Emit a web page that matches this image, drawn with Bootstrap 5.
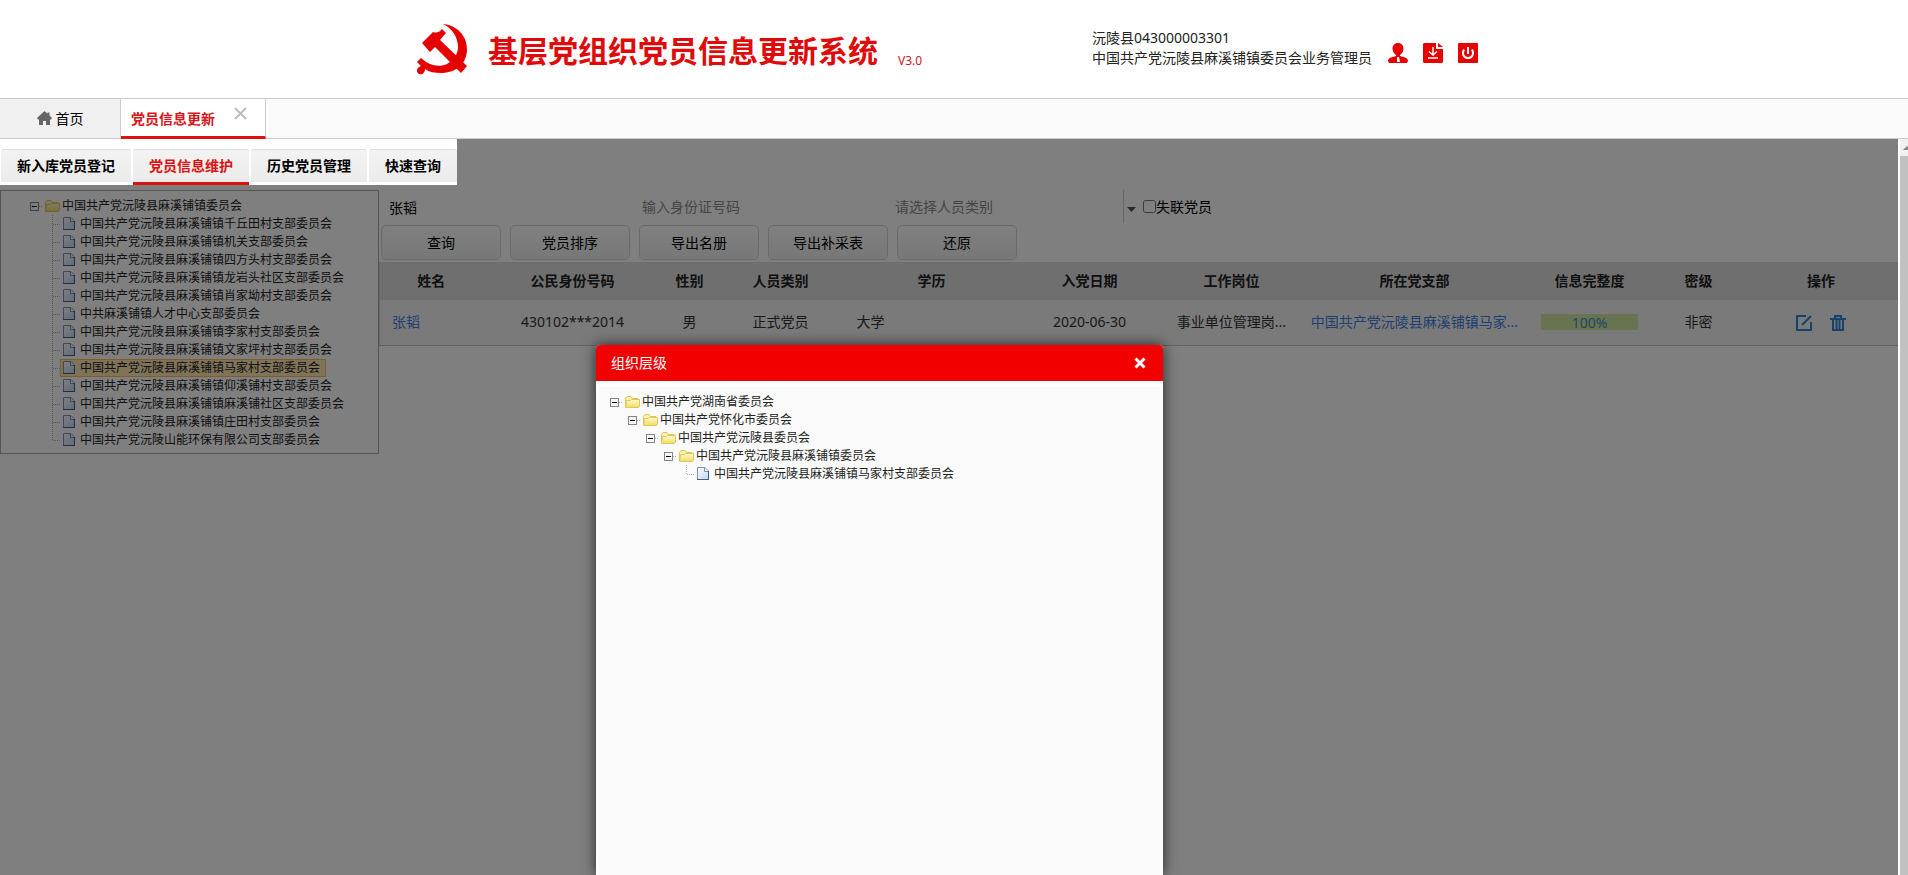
<!DOCTYPE html>
<html lang="zh-CN">
<head>
<meta charset="utf-8">
<meta name="viewport" content="width=device-width, initial-scale=1">
<title>基层党组织党员信息更新系统</title>
<link href="https://cdn.jsdelivr.net/npm/bootstrap@5.3.0/dist/css/bootstrap.min.css" rel="stylesheet">
<style>
body{font-family:"Noto Sans","Noto Sans CJK SC",sans-serif;font-size:14px;line-height:20px;color:#222;height:100vh;overflow:hidden;background:#fff}
a{text-decoration:none;color:inherit}
.site-head{height:98px}
.head-inner{max-width:1076px}
.emblem{width:52px;height:52px;fill:#e60000}
.site-title{font-size:30px;line-height:40px;font-weight:700;color:#e00a0a;font-family:"Noto Sans CJK SC",sans-serif}
.version{font-size:12px;line-height:20px;color:#c8161d}
.head-user{padding-bottom:2px}
.head-links{gap:15px;padding-right:14px}
.head-icon{width:20px;height:20px;display:block}
.page-tabs{height:41px;background:#fafafa;border-top:1px solid #ccc;border-bottom:1px solid #ccc}
.tab-home{width:121px;background:#f0f0f0;border-right:1px solid #ccc;color:#000}
.tab-open{width:145px;background:#fff;border-right:1px solid #ccc;border-bottom:3px solid #e01010;height:40px;color:#d7141a;padding:2px 18px 0 10px}
.tab-close{width:13px;height:13px;margin-bottom:10px}
.workspace{background:#fff}
.shade{background:rgba(0,0,0,.5);z-index:1}
.sub-tabs{z-index:2;background:#fff;padding:10px 0 0 1px;gap:2px}
.sub-tabs a{padding:0 16px;height:36px;line-height:32px;font-weight:700;color:#000;background:linear-gradient(#f3f3f3,#ebebeb);background-clip:padding-box;border-top:1px solid #ddd;border-bottom:3px solid #fff;border-radius:3px 3px 0 0}
.sub-tabs a.current{color:#e01010;border-bottom-color:#e01010}
.content-row{padding-top:5px}
.tree-panel{width:379px;border:1px solid #aaa;padding:6px 0 4px 24px}
.tree{font-size:12px;line-height:18px;list-style:none;margin:0;padding:0}
.tree ul{list-style:none;margin:0;padding:0 0 0 18px}
.node{display:flex;height:18px;align-items:center;color:#222}
.node svg{width:18px;height:18px;flex:none}
.node span{padding:0 1px}
.node .pick{display:flex;align-items:center;height:16px;background:#ffe6b0;outline:1px solid #ffb951;padding-right:4px}
.filters{height:33px}
.filters input[type=text],.filters select{border:0;background:transparent;padding:0 10px;width:253px;color:#000;outline:0;height:33px}
.filters input::placeholder{color:#8a8a8a;opacity:1}
.filters select{appearance:none;color:#8a8a8a;width:239px;border-right:1px solid #ccc}
.filters svg{width:9px;height:5px;margin:6px 7px 0 3px}
.filters input[type=checkbox]{width:13px;height:13px;margin:0}
.actions{gap:9px;padding:2px 0 2px 2px}
.actions button{width:120px;height:35px;border:1px solid #d5d5d5;border-radius:5px;background:linear-gradient(#fff,#f0f0f0);color:#000;font-size:14px}
.members{table-layout:fixed;width:100%;text-align:center;border-left:1px solid #ccc}
.members th{height:38px;padding:0;background:#dedede;color:#222}
.members td{height:45px;padding:0;background:#f4f4f4;border-bottom:1px solid #c5c5c5;color:#333;white-space:nowrap}
.members td.flush{text-align:left;padding-left:12px}
.members td a{color:#3f7fe0}
.complete{height:16px;width:97px;background:#d0e6a2;line-height:18px;color:#3f8fd0}
.op-icon{width:18px;height:18px;fill:none;stroke:#2f86d6;stroke-width:2}
.scroll-rail{width:11px;background:#f1f1f1;border-left:2px solid #fff}
.scroll-up{height:17px}
.scroll-thumb{background:#c1c1c1}
.dialog{z-index:3;left:596px;top:206px;bottom:0;width:567px;border-radius:4px 4px 0 0;background:#fff;box-shadow:0 0 14px rgba(0,0,0,.7)}
.dialog-head{height:36px;background:#f20000;color:#fff;border-radius:4px 4px 0 0;padding:0 15px}
.dialog-head button{border:0;background:none;padding:0;width:16px;height:16px}
.dialog-body{background:#fafafa;margin:6px 3px 0;padding:6px}
</style>
</head>
<body class="d-flex flex-column">
<svg width="0" height="0" class="position-absolute">
  <defs>
    <linearGradient id="fold" x1="0" y1="0" x2="0" y2="1"><stop offset="0" stop-color="#fffbd0"/><stop offset="1" stop-color="#f3dc5c"/></linearGradient>
    <linearGradient id="sheet" x1="0" y1="0" x2="1" y2="1"><stop offset="0" stop-color="#fff"/><stop offset="1" stop-color="#bcd6f7"/></linearGradient>
    <symbol id="minus" viewBox="0 0 18 18"><path d="M14 9.500H18" stroke="#aaa" stroke-dasharray="1 1"/><rect x="5.500" y="5.500" width="8" height="8" fill="#f6f6f6" stroke="#848484"/><path d="M7 9.500h5" stroke="#000"/></symbol>
    <symbol id="folder" viewBox="0 0 18 18"><path d="M2.500 14V5.500l1.500-2h4l1.500 2h5.500v2.500" fill="#fff3a8" stroke="#dcc25a"/><path d="M2.500 14.500l1-7h4l1-1h8v6.500l-1 1.500z" fill="url(#fold)" stroke="#dfc660"/></symbol>
    <symbol id="doc" viewBox="0 0 18 18"><path d="M2.500 2.500h7.500l3.500 3.500v8.500h-11z" fill="url(#sheet)" stroke="#7890b8"/><path d="M9.500 3v3.500h4" fill="#fff" stroke="#7890b8"/><path d="M2 14.500h12M13.500 6v9" stroke="#4a5c86"/></symbol>
    <symbol id="elbow" viewBox="0 0 18 18"><path d="M9.500 0v18M10 9.500h8" stroke="#aaa" stroke-dasharray="1 1"/></symbol>
    <symbol id="corner" viewBox="0 0 18 18"><path d="M9.500 0v10M10 9.500h8" stroke="#aaa" stroke-dasharray="1 1"/></symbol>
  </defs>
</svg>

<header class="site-head flex-shrink-0">
  <div class="head-inner mx-auto h-100 d-flex align-items-center">
    <svg class="emblem" viewBox="0 0 52 52"><path d="M27 1C40 2 51 12 51 26 51 41 40 50 25 50 19 50 13 49 9 46 9 50 6 52 3 51 0 49 0 45 5 43L1 39 5 35 10 39C16 43 25 44 31 41 39 36 42 30 42 24 42 14 36 5 27 1Z"/><path d="M6 20L17 9Q22 11 26 6L30 10 24 17 51 43 45 50 19 24 14 29Z"/></svg>
    <h1 class="site-title mb-0 ms-3 ps-1">基层党组织党员信息更新系统</h1>
    <span class="version ms-3 ps-1 mt-4">V3.0</span>
    <div class="head-user ms-auto">沅陵县043000003301<br>中国共产党沅陵县麻溪铺镇委员会业务管理员</div>
    <div class="head-links d-flex ms-3 mt-2">
      <a href="#" aria-label="用户"><svg class="head-icon" viewBox="0 0 20 20" fill="#e80000"><path d="M10 0c3.500 0 5.500 2.500 5.500 5.500 0 3-1.500 5-3.500 6.500v1c4 1 8 2 8 5l-1 2H1l-1-2c0-3 4-4 8-5v-1C6 10.500 4.500 8.500 4.500 5.500 4.500 2.500 6.500 0 10 0z"/><path d="M9 14h2l1 5H9z" fill="#fff"/></svg></a>
      <a href="#" aria-label="下载"><svg class="head-icon" viewBox="0 0 20 20"><path d="M1 0h12v6h7v13l-1 1H1l-1-1V1zM15 0l5 4h-5z" fill="#e80000"/><path d="M10 4v8M6 8.500l4 3.500 4-3.500M5 15h10" fill="none" stroke="#fff" stroke-width="1.500"/></svg></a>
      <a href="#" aria-label="退出"><svg class="head-icon" viewBox="0 0 20 20"><rect width="20" height="20" rx="1" fill="#e80000"/><path d="M10 4v7M6 6.500C3.500 11 6 15 10 15s6.500-4 4-8.500" fill="none" stroke="#fff" stroke-width="2"/></svg></a>
    </div>
  </div>
</header>

<nav class="page-tabs d-flex flex-shrink-0">
  <a href="#" class="tab-home d-flex align-items-center justify-content-center"><svg width="15" height="15" viewBox="0 0 15 15" class="me-1"><path d="M7.500 0L0 7l1 1.500h1V14h4v-4h3v4h4V8.500h1L15 7l-2.500-2.500V1.500h-2v1.200z" fill="#666"/></svg>首页</a>
  <div class="tab-open d-flex align-items-center justify-content-between"><a href="#" class="fw-bold">党员信息更新</a><button class="border-0 bg-transparent p-0 d-flex" aria-label="关闭标签"><svg class="tab-close" viewBox="0 0 13 13"><path d="M1 1l11 11M12 1L1 12" stroke="#bbb" stroke-width="2"/></svg></button></div>
</nav>

<main class="workspace position-relative flex-fill d-flex overflow-hidden">
  <div class="flex-fill position-relative">
    <div class="shade position-absolute top-0 start-0 w-100 h-100"></div>
    <nav class="sub-tabs position-relative d-inline-flex align-top">
      <a href="#">新入库党员登记</a><a href="#" class="current">党员信息维护</a><a href="#">历史党员管理</a><a href="#">快速查询</a>
    </nav>
    <div class="content-row d-flex align-items-start">
      <aside class="tree-panel flex-shrink-0">
        <ul class="tree">
          <li><a href="#" class="node"><svg><use href="#minus"/></svg><svg><use href="#folder"/></svg><span>中国共产党沅陵县麻溪铺镇委员会</span></a>
            <ul>
              <li><a href="#" class="node"><svg><use href="#elbow"/></svg><svg><use href="#doc"/></svg><span>中国共产党沅陵县麻溪铺镇千丘田村支部委员会</span></a></li>
              <li><a href="#" class="node"><svg><use href="#elbow"/></svg><svg><use href="#doc"/></svg><span>中国共产党沅陵县麻溪铺镇机关支部委员会</span></a></li>
              <li><a href="#" class="node"><svg><use href="#elbow"/></svg><svg><use href="#doc"/></svg><span>中国共产党沅陵县麻溪铺镇四方头村支部委员会</span></a></li>
              <li><a href="#" class="node"><svg><use href="#elbow"/></svg><svg><use href="#doc"/></svg><span>中国共产党沅陵县麻溪铺镇龙岩头社区支部委员会</span></a></li>
              <li><a href="#" class="node"><svg><use href="#elbow"/></svg><svg><use href="#doc"/></svg><span>中国共产党沅陵县麻溪铺镇肖家坳村支部委员会</span></a></li>
              <li><a href="#" class="node"><svg><use href="#elbow"/></svg><svg><use href="#doc"/></svg><span>中共麻溪铺镇人才中心支部委员会</span></a></li>
              <li><a href="#" class="node"><svg><use href="#elbow"/></svg><svg><use href="#doc"/></svg><span>中国共产党沅陵县麻溪铺镇李家村支部委员会</span></a></li>
              <li><a href="#" class="node"><svg><use href="#elbow"/></svg><svg><use href="#doc"/></svg><span>中国共产党沅陵县麻溪铺镇文家坪村支部委员会</span></a></li>
              <li><a href="#" class="node"><svg><use href="#elbow"/></svg><b class="pick fw-normal"><svg><use href="#doc"/></svg><span>中国共产党沅陵县麻溪铺镇马家村支部委员会</span></b></a></li>
              <li><a href="#" class="node"><svg><use href="#elbow"/></svg><svg><use href="#doc"/></svg><span>中国共产党沅陵县麻溪铺镇仰溪铺村支部委员会</span></a></li>
              <li><a href="#" class="node"><svg><use href="#elbow"/></svg><svg><use href="#doc"/></svg><span>中国共产党沅陵县麻溪铺镇麻溪铺社区支部委员会</span></a></li>
              <li><a href="#" class="node"><svg><use href="#elbow"/></svg><svg><use href="#doc"/></svg><span>中国共产党沅陵县麻溪铺镇庄田村支部委员会</span></a></li>
              <li><a href="#" class="node"><svg><use href="#corner"/></svg><svg><use href="#doc"/></svg><span>中国共产党沅陵山能环保有限公司支部委员会</span></a></li>
            </ul>
          </li>
        </ul>
      </aside>
      <section class="flex-fill pt-1px">
        <form class="filters d-flex align-items-center">
          <input type="text" value="张韬" aria-label="姓名"><input type="text" placeholder="输入身份证号码" aria-label="身份证号码">
          <select aria-label="人员类别"><option>请选择人员类别</option></select>
          <svg viewBox="0 0 9 5"><path d="M0 0h9L4.500 5z" fill="#555"/></svg>
          <input type="checkbox" id="lost"><label for="lost" class="text-black">失联党员</label>
        </form>
        <div class="actions d-flex">
          <button type="button">查询</button><button type="button">党员排序</button><button type="button">导出名册</button><button type="button">导出补采表</button><button type="button">还原</button>
        </div>
        <table class="members">
          <colgroup><col width="103"><col width="180"><col width="54"><col width="128"><col width="174"><col width="142"><col width="142"><col width="224"><col width="126"><col width="92"><col width="153"></colgroup>
          <thead><tr><th>姓名</th><th>公民身份号码</th><th>性别</th><th>人员类别</th><th>学历</th><th>入党日期</th><th>工作岗位</th><th>所在党支部</th><th>信息完整度</th><th>密级</th><th>操作</th></tr></thead>
          <tbody><tr>
            <td class="flush"><a href="#">张韬</a></td><td>430102***2014</td><td>男</td><td>正式党员</td><td class="flush">大学</td><td>2020-06-30</td><td>事业单位管理岗...</td><td><a href="#">中国共产党沅陵县麻溪铺镇马家...</a></td>
            <td><div class="complete mx-auto">100%</div></td><td>非密</td>
            <td><a href="#" aria-label="编辑" class="me-3"><svg class="op-icon" viewBox="0 0 18 18"><path d="M11 2H2v14h14V8M7 11l9-9"/></svg></a><a href="#" aria-label="删除"><svg class="op-icon" viewBox="0 0 18 18"><path d="M1 5h16M6 4V2h6v2M4 5v11h10V5M7.500 6v9M10.500 6v9"/></svg></a></td>
          </tr></tbody>
        </table>
      </section>
    </div>
  </div>
  <div class="scroll-rail d-flex flex-column flex-shrink-0">
    <div class="scroll-up d-flex align-items-center justify-content-end"><svg width="6" height="4" viewBox="0 0 6 4"><path d="M0 4l4-4 2 2v2z" fill="#888"/></svg></div>
    <div class="scroll-thumb flex-fill"></div>
  </div>

  <div class="dialog position-absolute d-flex flex-column" role="dialog" aria-label="组织层级">
    <div class="dialog-head d-flex align-items-center justify-content-between"><span>组织层级</span><button type="button" aria-label="关闭" class="d-flex align-items-center justify-content-center"><svg width="12" height="12" viewBox="0 0 12 12"><path d="M1.500 1.500l9 9M10.500 1.500l-9 9" stroke="#fff" stroke-width="3"/></svg></button></div>
    <div class="dialog-body flex-fill">
      <ul class="tree">
        <li><a href="#" class="node"><svg><use href="#minus"/></svg><svg><use href="#folder"/></svg><span>中国共产党湖南省委员会</span></a>
        <ul><li><a href="#" class="node"><svg><use href="#minus"/></svg><svg><use href="#folder"/></svg><span>中国共产党怀化市委员会</span></a>
        <ul><li><a href="#" class="node"><svg><use href="#minus"/></svg><svg><use href="#folder"/></svg><span>中国共产党沅陵县委员会</span></a>
        <ul><li><a href="#" class="node"><svg><use href="#minus"/></svg><svg><use href="#folder"/></svg><span>中国共产党沅陵县麻溪铺镇委员会</span></a>
        <ul><li><a href="#" class="node"><svg><use href="#corner"/></svg><svg><use href="#doc"/></svg><span>中国共产党沅陵县麻溪铺镇马家村支部委员会</span></a></li></ul>
        </li></ul></li></ul></li></ul></li>
      </ul>
    </div>
  </div>
</main>
<script src="https://cdn.jsdelivr.net/npm/bootstrap@5.3.0/dist/js/bootstrap.bundle.min.js"></script>
</body>
</html>
